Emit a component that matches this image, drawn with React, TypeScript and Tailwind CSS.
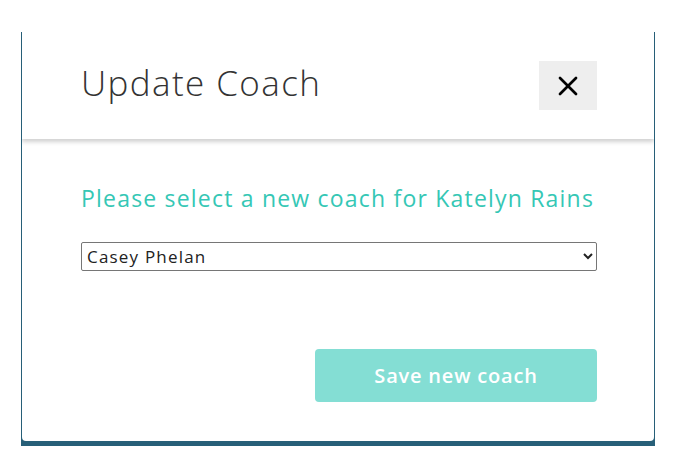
import { X } from "lucide-react";

const App = () => {
  return (
    <div className="w-[686px] h-[474px] bg-white pt-[32px] pl-[21px] font-['Open_Sans',sans-serif]">
      <div className="w-[634px] h-[414px] bg-[#275f78] pl-px pb-[5px]">
        <div className="h-full w-[632px] bg-white rounded-b-[4px] flex flex-col overflow-hidden">
          <div className="h-[107px] shrink-0 flex items-center justify-between pl-[59px] pr-[57px] shadow-[0_3px_4px_rgba(0,0,0,0.18)] relative z-10">
            <h1 className="text-[35px] font-light tracking-[1.4px] text-[#333] leading-none -mt-[7px]">Update Coach</h1>
            <button
              type="button"
              className="w-[58px] h-[49px] bg-[#eeeeee] flex items-center justify-center"
            >
              <X size={32} strokeWidth={2} color="#000" />
            </button>
          </div>
          <div className="flex-1 flex flex-col px-[59px] pr-[57px]">
            <p className="mt-[44px] text-[23px] tracking-[1.2px] text-[#35c7b5] leading-[30px]">
              Please select a new coach for Katelyn Rains
            </p>
            <select className="mt-[29px] h-[29px] w-full border border-[#767676] rounded-[2px] text-[17px] tracking-[1.2px] text-[#222] px-[1px]">
              <option>Casey Phelan</option>
            </select>
            <div className="mt-[78px] flex justify-end">
              <button
                type="button"
                className="w-[282px] h-[53px] bg-[#84ded4] rounded-[4px] text-white text-[20px] font-semibold tracking-[0.8px]"
              >
                Save new coach
              </button>
            </div>
          </div>
        </div>
      </div>
    </div>
  );
};

export default App;
